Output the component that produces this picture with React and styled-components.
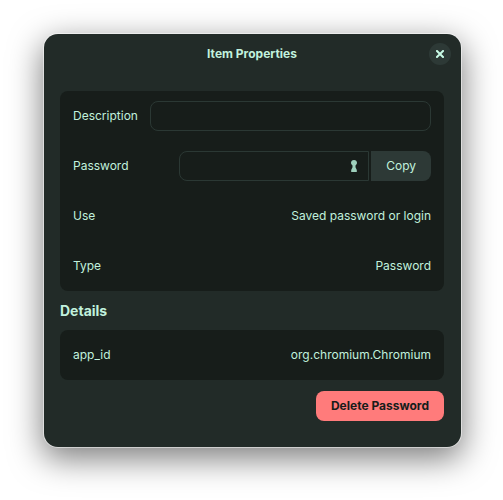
import React, { useState } from 'react'
import styled, { createGlobalStyle } from "styled-components"

const GlobalStyle = createGlobalStyle`
    * {
        box-sizing: border-box;
    }

    body {
        margin: 0;
        background: #ffffff;
        font-family: Inter, "Noto Sans", sans-serif;
        font-size: 12px;
        line-height: 20px;
        color: #c1f1dd;
    }

    button, input {
        font: inherit;
        color: inherit;
    }
`;

const Desktop = styled.main`
    padding: 34px 42px 52px 44px;
    overflow: hidden;
`;

const Window = styled.section`
    padding: 0 17px 26px 16px;
    border-radius: 14px;
    background: #222b28;
    box-shadow:
        0 0 0 1px rgba(255, 255, 255, 0.5),
        0 10px 32px 2px rgba(0, 0, 0, 0.5);
`;

const TitleBar = styled.header`
    display: grid;
    grid-template-columns: 22px 1fr 22px;
    align-items: center;
    height: 40px;
    margin: 0 -7px 17px;
`;

const Title = styled.h1`
    grid-column: 2;
    margin: 0;
    font-size: 12px;
    font-weight: 700;
    text-align: center;
`;

const CloseButton = styled.button`
    display: flex;
    align-items: center;
    justify-content: center;
    width: 22px;
    height: 22px;
    padding: 0;
    border: none;
    border-radius: 50%;
    background: #2d3936;
`;

const Card = styled.div`
    padding: 0 13px;
    border-radius: 8px;
    background: #171d1a;
`;

const Row = styled.div`
    display: flex;
    align-items: center;
    justify-content: space-between;
    gap: 12px;
    height: 50px;
`;

const Entry = styled.input`
    flex: 1;
    min-width: 0;
    height: 30px;
    padding: 0 10px;
    border: 1px solid #2b3834;
    border-radius: 8px;
    background: transparent;
    outline: none;
`;

const Linked = styled.div`
    display: flex;
    gap: 2px;
    width: 252px;
`;

const PasswordEntry = styled.div`
    display: flex;
    align-items: center;
    flex: 1;
    min-width: 0;
    height: 30px;
    padding-right: 6px;
    border: 1px solid #2b3834;
    border-radius: 8px 0 0 8px;

    & > input {
        flex: 1;
        min-width: 0;
        padding: 0 10px;
        border: none;
        background: transparent;
        outline: none;
    }
`;

const IconButton = styled.button`
    display: flex;
    padding: 0;
    border: none;
    background: none;
`;

const CopyButton = styled.button`
    height: 30px;
    padding: 0 15px;
    border: none;
    border-radius: 0 8px 8px 0;
    background: #2d3936;
`;

const SectionTitle = styled.h2`
    margin: 10px 0 9px;
    font-size: 14px;
    line-height: 20px;
    font-weight: 700;
`;

const Actions = styled.div`
    display: flex;
    justify-content: flex-end;
    margin-top: 11px;
`;

const DeleteButton = styled.button`
    height: 30px;
    padding: 0 15px;
    border: none;
    border-radius: 8px;
    background: #ff7b7b;
    color: #171d1a;
    font-weight: 700;
`;

const CloseIcon = () => (
  <svg width="8" height="8" viewBox="0 0 8 8" aria-hidden="true">
    <path d="M1 1L7 7M7 1L1 7" stroke="#c8fbe6" strokeWidth="2" strokeLinecap="square" />
  </svg>
)

// keyhole, toggles the visibility of the password
const KeyholeIcon = () => (
  <svg width="16" height="16" viewBox="0 0 16 16" fill="#9ed0bc" aria-hidden="true">
    <path d="M8 2C6.2 2 5 3.3 5 4.8C5 5.9 5.6 6.8 6.5 7.4V9.3L5.2 12V14H10.8V12L9.5 9.3V7.4C10.4 6.8 11 5.9 11 4.8C11 3.3 9.8 2 8 2Z" />
  </svg>
)

const Property = ({ name, value }) => (
  <Row>
    <span>{name}</span>
    <span>{value}</span>
  </Row>
)

const App = () => {
  const [description, setDescription] = useState("")
  const [password, setPassword] = useState("")
  const [visible, setVisible] = useState(false)

  return (
    <>
      <GlobalStyle />
      <Desktop>
        <Window>
          <TitleBar>
            <Title>Item Properties</Title>
            <CloseButton type="button" aria-label="Close">
              <CloseIcon />
            </CloseButton>
          </TitleBar>

          <Card>
            <Row>
              <label htmlFor="description">Description</label>
              <Entry
                id="description"
                value={description}
                onChange={(e) => setDescription(e.target.value)}
              />
            </Row>
            <Row>
              <label htmlFor="password">Password</label>
              <Linked>
                <PasswordEntry>
                  <input
                    id="password"
                    type={visible ? "text" : "password"}
                    value={password}
                    onChange={(e) => setPassword(e.target.value)}
                  />
                  <IconButton
                    type="button"
                    aria-label="Show password"
                    onClick={() => setVisible(!visible)}
                  >
                    <KeyholeIcon />
                  </IconButton>
                </PasswordEntry>
                <CopyButton
                  type="button"
                  onClick={() => navigator.clipboard.writeText(password)}
                >
                  Copy
                </CopyButton>
              </Linked>
            </Row>
            <Property name="Use" value="Saved password or login" />
            <Property name="Type" value="Password" />
          </Card>

          <SectionTitle>Details</SectionTitle>
          <Card>
            <Property name="app_id" value="org.chromium.Chromium" />
          </Card>

          <Actions>
            <DeleteButton type="button">Delete Password</DeleteButton>
          </Actions>
        </Window>
      </Desktop>
    </>
  )
}

export default App
